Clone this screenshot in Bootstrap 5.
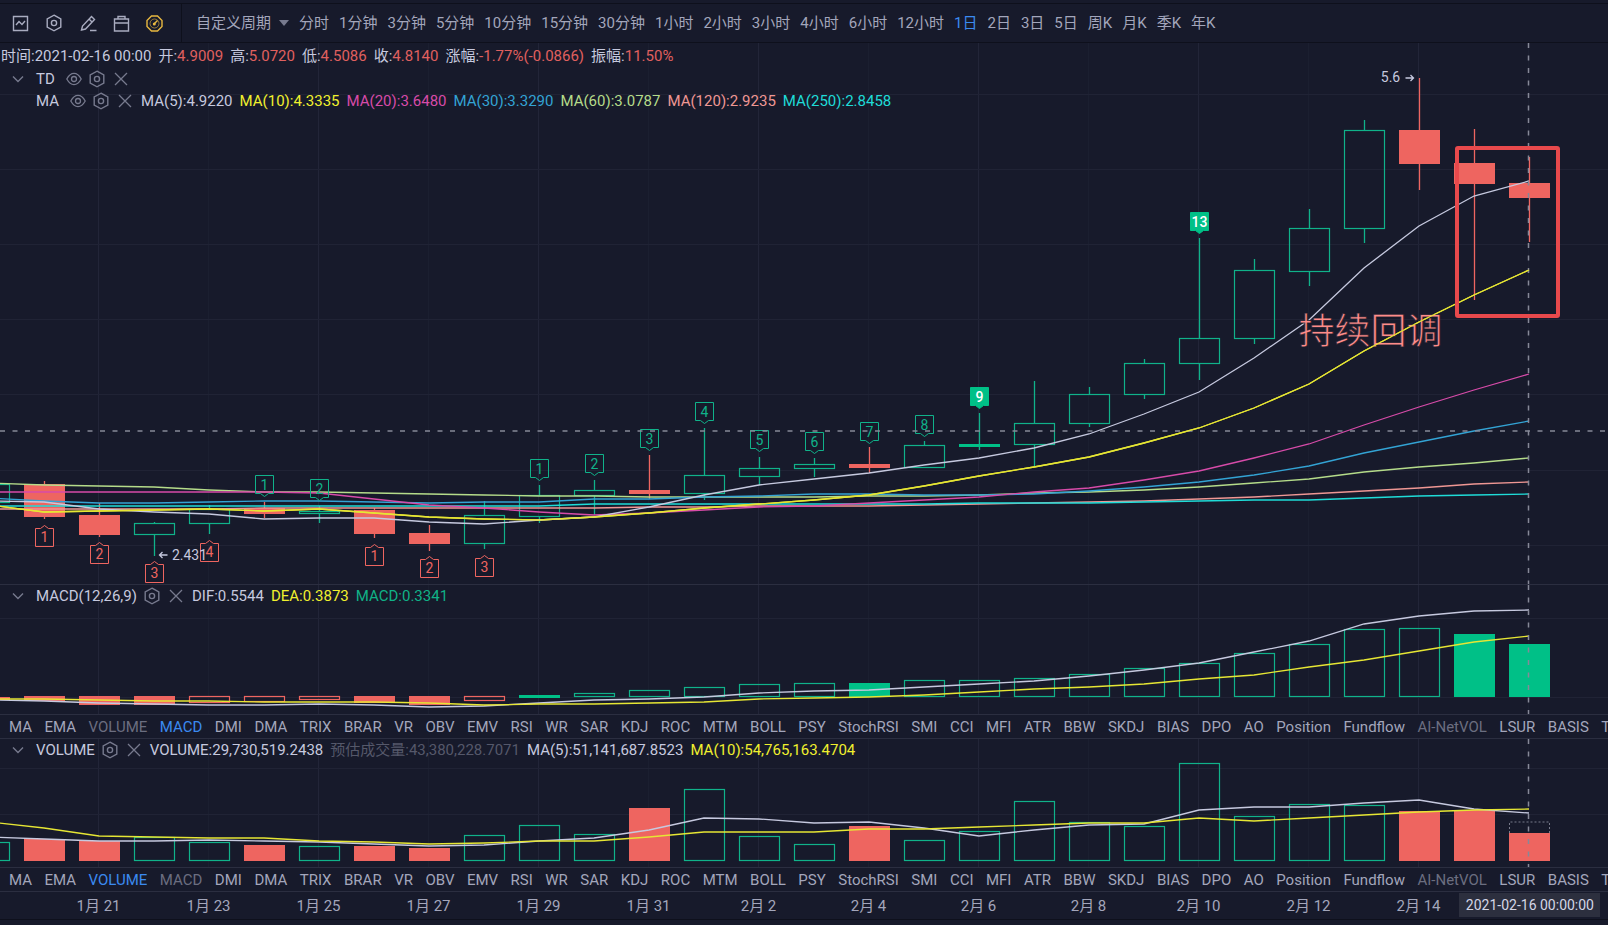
<!DOCTYPE html>
<html lang="zh-CN">
<head>
<meta charset="utf-8">
<meta name="viewport" content="width=device-width, initial-scale=1">
<title>K线图</title>
<link href="https://cdn.jsdelivr.net/npm/bootstrap@5.3.0/dist/css/bootstrap.min.css" rel="stylesheet">
<style>
:root{--bg:#171a2b;--line:#2b2e40;--dark:#0e101c;--txt:#c6c9df;--dim:#a3a6bb;--mute:#6b6e80;--up:#00c087;--down:#ee6560;--yellow:#f0f02e}
body{background:var(--bg);color:var(--txt);font-family:Roboto,"Noto Sans CJK SC",sans-serif;font-size:15px;line-height:22px}
.topbar{height:40px;border-top:1px solid var(--dark);border-bottom:1px solid var(--dark);margin-top:3px}
.tools{width:182px;padding-left:12px;gap:16px;border-right:1px solid var(--dark);color:#a9acc0}
.plain{background:none;border:0;padding:0;color:inherit;line-height:inherit;display:flex;align-items:center}
.periods{gap:10px;color:var(--dim);padding-left:14px}
.periods a,.tabs a{color:inherit;text-decoration:none;white-space:nowrap}
.tabs a.on,.periods a.on{color:#3b8af0}
.tabs a.off{color:var(--mute)}
.tabs{height:25px;line-height:25px;padding-left:9px;font-size:14px;white-space:nowrap;color:var(--dim);border-top:1px solid var(--line);border-bottom:1px solid var(--line);overflow:hidden}
.tabs a{font-size:15px;margin-right:9px}
.pane{overflow:hidden}
.pane svg.plot{position:absolute;left:0;top:0;width:100%;height:100%}
.pane-main{flex:1 0 541px}
.pane-sub{height:128px}
.pane-first{height:130px;border-top:1px solid var(--line)}
.legend{position:relative;gap:7px;white-space:nowrap;height:22px}
.legend .plain{color:#777a8e}
.legend .shut{margin:0 2px}
.fold{width:29px;padding-left:12px}
.info{padding-left:1px;height:25px}
.axis{height:28px;border-bottom:1px solid var(--dark);color:var(--dim)}
.axis span{position:absolute;top:3px;transform:translateX(-50%);white-space:nowrap}
.axis .stamp{background:#2c2f3e;color:#d3d6e6;right:8px;top:1px;transform:none;padding:0 6px 0 7px;height:24px;line-height:25px;font-size:14px}
.foot{height:5px}
.c-down{color:#e0605f}.c-yellow{color:var(--yellow)}.c-pink{color:#d74ba9}.c-blue{color:#33a3d4}.c-lime{color:#b5dc8a}.c-rose{color:#ef9794}.c-cyan{color:#1fdcd8}.c-up{color:#10b287}.c-mute{color:#55586a}
svg text{font-family:Roboto,"Noto Sans CJK SC",sans-serif;font-size:14px;text-anchor:middle}
svg text.note{font-size:36px;font-family:"Noto Sans CJK SC",sans-serif;text-anchor:start;fill:#ff8c8a;stroke:var(--bg);stroke-opacity:.8;stroke-width:1px}
</style>
</head>
<body>
<svg width="0" height="0" class="position-absolute" aria-hidden="true">
<defs>
<symbol id="i-gear" viewBox="0 0 16 18"><path d="M8 1.2 14.8 5v8L8 16.8 1.2 13V5z" fill="none" stroke="currentColor" stroke-width="1.4"/><circle cx="8" cy="9" r="2.6" fill="none" stroke="currentColor" stroke-width="1.4"/></symbol>
<symbol id="i-eye" viewBox="0 0 16 14"><path d="M.8 7C2.8 3.400 5.200 1.400 8 1.400s5.200 2 7.200 5.600c-2 3.600-4.400 5.600-7.200 5.600S2.800 10.600.8 7z" fill="none" stroke="currentColor" stroke-width="1.300"/><circle cx="8" cy="7" r="2.500" fill="none" stroke="currentColor" stroke-width="1.300"/></symbol>
<symbol id="i-x" viewBox="0 0 14 14"><path d="m1 1 12 12M13 1 1 13" fill="none" stroke="currentColor" stroke-width="1.300"/></symbol>
<symbol id="i-down" viewBox="0 0 12 8"><path d="m1 1.500 5 5 5-5" fill="none" stroke="currentColor" stroke-width="1.400"/></symbol>
</defs>
</svg>
<div class="d-flex flex-column min-vh-100 overflow-hidden">
<header class="topbar d-flex">
  <div class="tools d-flex align-items-center flex-shrink-0">
    <button class="plain" aria-label="指标"><svg width="17" height="17" viewBox="0 0 17 17" fill="none" stroke="currentColor" stroke-width="1.400"><path d="M1.500 1.500h14v14h-14zM4 10l3-3.500 3 3 3-3.500"/></svg></button>
    <button class="plain" aria-label="设置"><svg width="18" height="18"><use href="#i-gear"/></svg></button>
    <button class="plain" aria-label="画线"><svg width="18" height="17" viewBox="0 0 18 17" fill="none" stroke="currentColor" stroke-width="1.400"><path d="M2.500 15l1-4 9-9.500 3 3-9 9.500-4 1zM10 4l3 3M11 15.500h6.500"/></svg></button>
    <button class="plain" aria-label="布局"><svg width="17" height="17" viewBox="0 0 17 17" fill="none" stroke="currentColor" stroke-width="1.400"><path d="M1.500 4h14v12h-14zM1.500 8h14M5 4V1.500h7V4"/></svg></button>
    <button class="plain" aria-label="预警"><svg width="17" height="17" viewBox="0 0 17 17" fill="none" stroke="#e8b840" stroke-width="1.400"><path d="M5.500 1h6L16 5.500v6L11.500 16h-6L1 11.500v-6z"/><circle cx="8.500" cy="8.500" r="4.500" stroke-width="1" stroke-opacity=".6"/><path d="M8 9l3.500-3.500"/><circle cx="8.300" cy="9" r=".8" fill="#e8b840"/></svg></button>
  </div>
  <nav class="periods d-flex align-items-center" id="periods"><button class="plain">自定义周期<svg class="ms-2" width="10" height="6"><path d="M0 0h10l-5 6z" fill="#777a8e"/></svg></button></nav>
</header>

<section class="pane pane-main position-relative">
  <svg class="plot" id="main"></svg>
  <div class="legend info d-flex align-items-center"><span>时间:2021-02-16 00:00</span><span>开:<span class="c-down">4.9009</span></span><span>高:<span class="c-down">5.0720</span></span><span>低:<span class="c-down">4.5086</span></span><span>收:<span class="c-down">4.8140</span></span><span>涨幅:<span class="c-down">-1.77%(-0.0866)</span></span><span>振幅:<span class="c-down">11.50%</span></span></div>
  <div class="legend d-flex align-items-center"><button class="plain fold" aria-label="收起"><svg width="12" height="8"><use href="#i-down"/></svg></button><span>TD</span><button class="plain ms-1" aria-label="显示"><svg width="16" height="14"><use href="#i-eye"/></svg></button><button class="plain" aria-label="设置"><svg width="16" height="18"><use href="#i-gear"/></svg></button><button class="plain shut" aria-label="关闭"><svg width="14" height="14"><use href="#i-x"/></svg></button></div>
  <div class="legend d-flex align-items-center"><span class="fold"></span><span>MA</span><button class="plain ms-1" aria-label="显示"><svg width="16" height="14"><use href="#i-eye"/></svg></button><button class="plain" aria-label="设置"><svg width="16" height="18"><use href="#i-gear"/></svg></button><button class="plain shut" aria-label="关闭"><svg width="14" height="14"><use href="#i-x"/></svg></button><span>MA(5):4.9220</span><span class="c-yellow">MA(10):4.3335</span><span class="c-pink">MA(20):3.6480</span><span class="c-blue">MA(30):3.3290</span><span class="c-lime">MA(60):3.0787</span><span class="c-rose">MA(120):2.9235</span><span class="c-cyan">MA(250):2.8458</span></div>
</section>
<section class="pane pane-first position-relative">
  <svg class="plot" id="macd"></svg>
  <div class="legend d-flex align-items-center"><button class="plain fold" aria-label="收起"><svg width="12" height="8"><use href="#i-down"/></svg></button><span>MACD(12,26,9)</span><button class="plain" aria-label="设置"><svg width="16" height="18"><use href="#i-gear"/></svg></button><button class="plain shut" aria-label="关闭"><svg width="14" height="14"><use href="#i-x"/></svg></button><span>DIF:0.5544</span><span class="c-yellow">DEA:0.3873</span><span class="c-up">MACD:0.3341</span></div>
</section>
<nav class="tabs" data-on="MACD" data-off="VOLUME"></nav>
<section class="pane pane-sub position-relative">
  <svg class="plot" id="vol"></svg>
  <div class="legend d-flex align-items-center"><button class="plain fold" aria-label="收起"><svg width="12" height="8"><use href="#i-down"/></svg></button><span>VOLUME</span><button class="plain" aria-label="设置"><svg width="16" height="18"><use href="#i-gear"/></svg></button><button class="plain shut" aria-label="关闭"><svg width="14" height="14"><use href="#i-x"/></svg></button><span>VOLUME:29,730,519.2438</span><span class="c-mute">预估成交量:43,380,228.7071</span><span>MA(5):51,141,687.8523</span><span class="c-yellow">MA(10):54,765,163.4704</span></div>
</section>
<nav class="tabs" data-on="VOLUME" data-off="MACD"></nav>
<div class="axis position-relative" id="axis"><span class="stamp">2021-02-16 00:00:00</span></div>
<div class="foot"></div>
</div>
<script src="https://cdn.jsdelivr.net/npm/bootstrap@5.3.0/dist/js/bootstrap.bundle.min.js"></script>
<script>
const el=(id)=>document.getElementById(id);
'分时 1分钟 3分钟 5分钟 10分钟 15分钟 30分钟 1小时 2小时 3小时 4小时 6小时 12小时 1日 2日 3日 5日 周K 月K 季K 年K'.split(' ').forEach(t=>el('periods').insertAdjacentHTML('beforeend',`<a href="#"${t==='1日'?' class="on"':''}>${t}</a>`));
document.querySelectorAll('.tabs').forEach(n=>{
  n.innerHTML='MA EMA VOLUME MACD DMI DMA TRIX BRAR VR OBV EMV RSI WR SAR KDJ ROC MTM BOLL PSY StochRSI SMI CCI MFI ATR BBW SKDJ BIAS DPO AO Position Fundflow AI-NetVOL LSUR BASIS TD'.split(' ').map(t=>`<a href="#" class="${t===n.dataset.on?'on':(t===n.dataset.off||t==='AI-NetVOL')?'off':''}">${t}</a>`).join(' ');
});
const UP='#10b28a',UPF='#00c087',DN='#ee6560';
/* day: [r/g filled or h hollow, body top, body bottom, high, low]; y counted from the window top, the pane starts at 43 */
const candles=[['h',484,503,484,503],['r',484,517,481,519],['r',515,535,503,537],['h',523,535,522,556],['h',509,524,505,534],['r',508,514,502,518],['h',511,514,506,523],['r',510,534,508,538],['r',533,544,525,551],['h',515,544,501,549],['h',495,517,485,523],['h',490,496,480,515],['r',490,494,455,499],['h',475,494,428,500],['h',468,477,457,485],['h',464,469,458,477],['r',464,468,447,473],['h',445,468,441,468],['g',444,447,413,450],['h',423,445,381,466],['h',394,424,387,427],['h',363,395,359,399],['h',338,364,238,380],['h',270,339,259,344],['h',228,272,209,286],['h',130,229,120,243],['r',130,164,78,190],['r',163,184,129,300],['r',183,198,157,242]];
const marks=[[4,1,475],[5,2,479],[9,1,459],[10,2,454],[11,3,429],[12,4,402],[13,5,430],[14,6,432],[15,7,422],[16,8,415],[17,9,387],[21,13,212]];
const lows=[[0,1,525],[1,2,542],[2,3,561],[3,4,540],[6,1,544],[7,2,556],[8,3,555]];
const ma={
 '#b5dc8a':[483,485,486,487,490,492,492,493,494,495,496,496,497,497,497,497,496,496,495,493,492,490,487,483,479,472,467,463,458],
 '#ef9794':[509,509,509,509,509,508,508,508,508,508,508,508,507,507,506,506,506,505,504,503,502,501,499,497,494,491,488,484,482],
 '#33a3d4':[498,501,503,503,502,501,501,502,503,502,502,499,499,497,496,494,494,495,495,494,491,487,482,475,466,453,442,431,421],
 '#1fdcd8':[506,506,506,506,506,506,506,506,506,506,506,504,504,504,504,504,504,504,503,503,503,502,501,500,500,498,496,495,494],
 '#d74ba9':[492,492,492,492,492,492,493,499,505,508,512,515,513,510,507,506,503,500,497,492,488,480,471,458,444,425,407,390,374],
 '#e6e634':[505,512,511,510,509,511,509,513,517,519,520,517,513,508,504,500,495,486,476,467,457,443,428,408,384,351,322,295,270],
 '#c6c9df':[501,502,509,512,514,519,518,518,522,524,520,517,507,495,485,479,473,465,458,448,434,414,392,358,320,268,226,196,181]};
const macd=[['r',697,700],['r',696,701],['r',696,705],['r',696,705],['n',696,703],['n',696,702],['n',696,700],['r',696,703],['r',696,705],['n',696,701],['g',695,698],['h',693,697],['h',690,697],['h',687,697],['h',684,697],['h',683,697],['g',683,697],['h',680,697],['h',680,697],['h',678,697],['h',674,697],['h',668,697],['h',663,697],['h',653,697],['h',644,697],['h',629,697],['h',628,697],['g',634,697],['g',644,697]];
const macdLines={'#c6c9df':[700,701,703,704,705,705,704,705,707,706,703,700,699,697,693,691,690,687,684,681,676,670,663,652,641,624,616,611,610],'#e6e634':[699,699,700,701,701,702,702,702,703,705,704,704,703,702,699,698,697,695,692,689,687,684,679,675,667,660,651,642,636]};
const vol=['h842','r839','r841','h837','h842','r845','h846','r846','r848','h835','h825','h834','r808','h789','h836','h844','r826','h840','h831','h801','h822','h826','h763','h816','h804','h805','r811','r810','r833'];
const volLines={'#c6c9df':[837,839,841,841,840,841,842,844,846,845,841,838,830,818,819,823,822,828,836,830,825,824,810,807,807,803,800,809,813],'#e6e634':[822,828,836,837,838,838,841,842,844,843,841,841,837,832,832,832,829,829,827,825,823,823,818,821,818,815,812,810,809]};
function draw(){
  const W=el('main').clientWidth,step=W*55/1608,x=i=>Math.round(W*44/1608+step*i)+.5,bw=Math.round(step*.745)-1;
  const rect=(i,k,t,b)=>k==='h'||k==='n'?`<rect x="${x(i)-bw/2}" y="${t+.5}" width="${bw}" height="${Math.max(b-t-1,1)}" fill="none" stroke="${k==='h'?UP:DN}" stroke-width="1.2"/>`:`<rect x="${x(i)-bw/2-.5}" y="${t}" width="${bw+1}" height="${b-t}" fill="${k==='r'?DN:UPF}"/>`;
  const line=(ys,c,o)=>`<polyline fill="none" stroke="${c}" stroke-width="1.3" points="${ys.map((y,j)=>(x(j-1)-.5)+','+(y-o)).join(' ')}"/>`;
  const grid=(ys)=>{let s='';for(let i=1;i<28;i+=2)s+=`<path d="M${x(i)-1} 0V900" stroke="#222538" stroke-opacity="${i%4===1?1:.45}"/>`;ys.forEach(y=>s+=`<path d="M0 ${y+.5}H${W}" stroke="#202335"/>`);return s};
  const cross=`<path d="M${x(27)-1} 0V900" stroke="#868998" stroke-width="1.5" stroke-dasharray="5 7.5"/>`;
  let s=grid([51,126,201,276,351,427,502]);
  candles.forEach(([k,t,b,h,l],j)=>{const i=j-1,c=k==='r'?DN:UP;t-=43;b-=43;s+=`<path d="M${x(i)} ${h-43}V${t}M${x(i)} ${b}V${l-43}" stroke="${c}" stroke-width="1.3"/>`+rect(i,k,t,b)});
  for(const c in ma)s+=line(ma[c],c,43);
  marks.forEach(([i,n,y])=>{const f=n>8,X=x(i);y-=43;s+=`<path d="M${X-9} ${y+.5}h18v18h-5l-4 3-4-3h-5z" fill="${f?UPF:'none'}" stroke="${f?UPF:UP}"/><text x="${X}" y="${y+15}" fill="${f?'#fff':UP}" ${f?'font-weight="500"':''}>${n}</text>`});
  lows.forEach(([i,n,y])=>{const X=x(i);y-=43;s+=`<path d="M${X-9} ${y+21.5}h18v-18h-5l-4-3-4 3h-5z" fill="none" stroke="${DN}"/><text x="${X}" y="${y+17}" fill="${DN}">${n}</text>`});
  s+=`<text x="${x(2)+35}" y="517" fill="#c6c9df">2.431</text><path d="M${x(2)+13} 512h-8m3-3-3 3 3 3M${x(25)-14} 35h8m-3-3 3 3-3 3" fill="none" stroke="#c6c9df" stroke-width="1.3"/><text x="${x(25)-29}" y="39" fill="#c6c9df">5.6</text>`;
  s+=`<path d="M0 388H${W}" stroke="#868998" stroke-width="1.5" stroke-dasharray="5 7.5"/>`+cross;
  s+=`<text class="note" x="${x(23)-11}" y="301">持续回调</text>`+line(ma['#e6e634'].map(y=>y),'#e6e634',43)+`<rect x="${x(26)-17.5}" y="105" width="${step+46}" height="168" rx="1" fill="none" stroke="#e8494c" stroke-width="4"/>`;
  el('main').innerHTML=s;
  s=grid([33,112]);macd.forEach(([k,t,b],j)=>s+=rect(j-1,k,t-585,b-585));for(const c in macdLines)s+=line(macdLines[c],c,585);
  el('macd').innerHTML=s+cross;
  s=grid([29,75]);vol.forEach((v,j)=>s+=rect(j-1,v[0],v.slice(1)-739,122));
  s+=`<path d="M${x(27)-bw/2} 94V83h${bw}V94" fill="none" stroke="#777a8a" stroke-dasharray="2 2"/>`;
  for(const c in volLines)s+=line(volLines[c],c,739);
  el('vol').innerHTML=s+cross;
  document.querySelectorAll('.axis span:not(.stamp)').forEach(n=>n.remove());
  ['1月 21','1月 23','1月 25','1月 27','1月 29','1月 31','2月 2','2月 4','2月 6','2月 8','2月 10','2月 12','2月 14'].forEach((t,j)=>el('axis').insertAdjacentHTML('afterbegin',`<span style="left:${x(1+2*j)-1}px">${t}</span>`));
}
draw();addEventListener('resize',draw);
</script>
</body>
</html>
